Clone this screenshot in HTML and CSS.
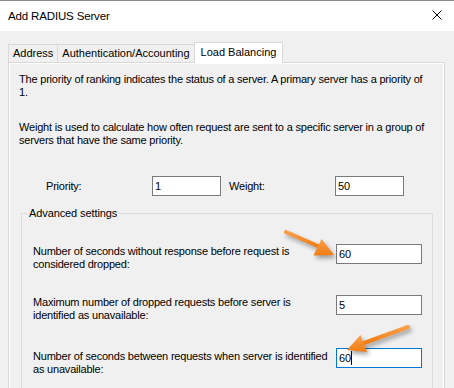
FILE: index.html
```html
<!DOCTYPE html>
<html lang="en">
<head>
  <meta charset="UTF-8" />
  <meta name="viewport" content="width=device-width, initial-scale=1.0"/>
  <title>Add RADIUS Server</title>
  <link rel="stylesheet" href="styles.css">
</head>
<body>
  <div class="dialog">
    <!-- Title bar -->
    <div class="titlebar">
      <span class="title">Add RADIUS Server</span>
      <svg class="close" width="10" height="10" viewBox="0 0 10 10">
        <path d="M0.5 0.5 L9.5 9.5 M9.5 0.5 L0.5 9.5" stroke="#000" stroke-width="1" fill="none"/>
      </svg>
    </div>

    <div class="content">
      <!-- Tabs -->
      <div class="tabs">
        <div class="tab">Address</div>
        <div class="tab">Authentication/Accounting</div>
        <div class="tab active">Load Balancing</div>
      </div>

      <!-- Load Balancing page -->
      <div class="panel">
        <p class="info">The priority of ranking indicates the status of a server. A primary server has a priority of<br>1.</p>
        <p class="info second">Weight is used to calculate how often request are sent to a specific server in a group of<br>servers that have the same priority.</p>

        <div class="prio-row">
          <label for="priority" class="prio-label">Priority:</label>
          <input type="text" id="priority" class="field small" value="1" />
          <label for="weight" class="weight-label">Weight:</label>
          <input type="text" id="weight" class="field small" value="50" />
        </div>

        <fieldset class="group">
          <legend>Advanced settings</legend>

          <div class="setting first">
            <label for="timeout">Number of seconds without response before request is<br>considered dropped:</label>
            <input type="text" id="timeout" class="field" value="60" />
          </div>

          <div class="setting">
            <label for="maxdropped">Maximum number of dropped requests before server is<br>identified as unavailable:</label>
            <input type="text" id="maxdropped" class="field" value="5" />
          </div>

          <div class="setting third">
            <label>Number of seconds between requests when server is identified<br>as unavailable:</label>
            <div class="field focused" role="textbox">60<span class="caret"></span></div>
          </div>
        </fieldset>
      </div>
    </div>

    <!-- Callout arrows drawn over the dialog -->
    <svg class="arrows" width="454" height="388" viewBox="0 0 454 388">
      <defs>
        <linearGradient id="orange" x1="0" y1="0" x2="0" y2="1">
          <stop offset="0" stop-color="#f9a04a"/>
          <stop offset="1" stop-color="#f07c12"/>
        </linearGradient>
      </defs>
      <g class="arrow">
        <path d="M286 232 L318 246" stroke="url(#orange)" stroke-width="4" stroke-linecap="round" fill="none"/>
        <polygon points="334,255 313.5,255.5 321.5,239" fill="url(#orange)"/>
      </g>
      <g class="arrow">
        <path d="M408 327 L364 343" stroke="url(#orange)" stroke-width="4" stroke-linecap="round" fill="none"/>
        <polygon points="347,350 360.5,335 367,352" fill="url(#orange)"/>
      </g>
    </svg>
  </div>
</body>
</html>
```

FILE: styles.css
```css
body {
  margin: 0;
  background: #f0f0f0;
  font-family: "Liberation Sans", Arial, sans-serif;
  font-size: 11px;
  color: #000;
}

.dialog {
  position: relative;
  width: 454px;
  height: 388px;
  overflow: hidden;
}

.titlebar {
  height: 30px;
  border-top: 1px solid #8c8c8c;
  background: #fff;
  display: flex;
  align-items: center;
  justify-content: space-between;
  padding: 0 12px 0 8px;
}

.title {
  font-size: 11.5px;
  letter-spacing: -0.15px;
}

.close {
  display: block;
  margin-top: -2px;
}

.content {
  padding: 11px 9px 0 8px;
}

/* Tabs */

.tabs {
  display: flex;
  align-items: flex-end;
  height: 20px;
}

.tab {
  height: 18px;
  box-sizing: border-box;
  line-height: 17px;
  padding: 0 4px;
  border: 1px solid #d9d9d9;
  border-bottom: none;
  margin-right: -1px;
  background: #f0f0f0;
}

.tab.active {
  position: relative;
  height: 21px;
  margin-bottom: -1px;
  padding: 0 6px;
  line-height: 19px;
  background: #fff;
  z-index: 1;
}

.panel {
  height: 340px;
  border: 1px solid #d9d9d9;
  background: #f0f0f0;
  box-shadow: inset 0 0 0 1px #fff;
  padding: 10px 10px 0;
}

.info {
  margin: 0;
  line-height: 13px;
  letter-spacing: -0.2px;
}

.info.second {
  margin-top: 22px;
}

/* Priority / weight row */

.prio-row {
  display: flex;
  align-items: center;
  margin-top: 29px;
  padding-left: 27px;
}

.prio-label,
.weight-label {
  width: 106px;
  letter-spacing: -0.2px;
}

.weight-label {
  margin-left: 8px;
}

.field {
  height: 20px;
  width: 86px;
  box-sizing: border-box;
  border: 1px solid #7a7a7a;
  background: #fff;
  padding: 0 2px;
  margin: 0;
  font-family: inherit;
  font-size: 11px;
  line-height: 18px;
  color: #000;
  outline: none;
}

.field.small {
  width: 69px;
}

.field.focused {
  border-color: #0078d7;
}

.caret {
  display: inline-block;
  width: 1px;
  height: 14px;
  background: #000;
  vertical-align: -3px;
}

/* Advanced settings group */

.group {
  width: 412px;
  box-sizing: border-box;
  margin: 11px 0 0 2px;
  padding: 0 10px 40px 11px;
  border: 1px solid #dcdcdc;
}

.group legend {
  margin-left: -6px;
  padding: 0 2px;
  line-height: 13px;
  letter-spacing: -0.1px;
}

.setting {
  display: flex;
  justify-content: space-between;
  align-items: flex-start;
  margin-top: 24px;
}

.setting.first {
  margin-top: 24px;
}

.setting.third {
  margin-top: 26px;
}

.setting label {
  padding-top: 1px;
  line-height: 13px;
  letter-spacing: -0.2px;
}

.setting.third label {
  padding-top: 2px;
}

.arrows {
  position: absolute;
  top: 0;
  left: 0;
  pointer-events: none;
}

.arrow {
  filter: drop-shadow(2px 3px 2px rgba(0, 0, 0, 0.35));
}
```
